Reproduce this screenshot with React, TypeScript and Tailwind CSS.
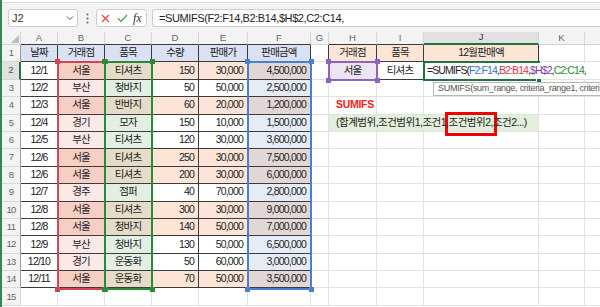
import React from "react";

const GRID = "border-[#e1e1e1]";
const DARK = "border-[#3c3c3c]";

const COLS: { k: string; w: string; label?: string }[] = [
  { k: "A", w: "w-[37px]" },
  { k: "B", w: "w-[47px]" },
  { k: "C", w: "w-[47px]" },
  { k: "D", w: "w-[47px]" },
  { k: "E", w: "w-[49px]" },
  { k: "F", w: "w-[63px]" },
  { k: "G", w: "w-[18px]" },
  { k: "H", w: "w-[48px]" },
  { k: "I", w: "w-[47px]" },
  { k: "J", w: "w-[115px]" },
  { k: "K", w: "w-[46px]" },
  { k: "L", w: "w-[40px]" },
];

const ALIGN = {
  l: "justify-start pl-[3px]",
  c: "justify-center",
  r: "justify-end pr-[4px]",
};

const DATA = [
  ["12/1", "서울", "티셔츠", "150", "30,000", "4,500,000"],
  ["12/2", "부산", "청바지", "50", "50,000", "2,500,000"],
  ["12/3", "서울", "반바지", "60", "20,000", "1,200,000"],
  ["12/4", "경기", "모자", "150", "10,000", "1,500,000"],
  ["12/5", "부산", "티셔츠", "120", "30,000", "3,600,000"],
  ["12/6", "서울", "티셔츠", "250", "30,000", "7,500,000"],
  ["12/6", "서울", "티셔츠", "200", "30,000", "6,000,000"],
  ["12/7", "경주", "점퍼", "40", "70,000", "2,800,000"],
  ["12/8", "서울", "티셔츠", "300", "30,000", "9,000,000"],
  ["12/8", "서울", "청바지", "140", "50,000", "7,000,000"],
  ["12/9", "부산", "청바지", "130", "50,000", "6,500,000"],
  ["12/10", "경기", "운동화", "50", "60,000", "3,000,000"],
  ["12/11", "서울", "운동화", "70", "50,000", "3,500,000"],
];

const HEAD = ["날짜", "거래점", "품목", "수량", "판매가", "판매금액"];

type Spec = { t?: React.ReactNode; al?: "l" | "c" | "r"; bg?: string; bd?: string; extra?: string };

function spec(n: number, k: string): Spec {
  const tableIdx = "ABCDEF".indexOf(k);
  if (n === 1) {
    if (tableIdx >= 0) return { t: HEAD[tableIdx], al: "c", bg: "bg-[#d9e1f2]", bd: DARK };
    if (k === "G") return { bd: "border-b-[#e1e1e1] border-r-[#3c3c3c]" };
    if (k === "H") return { t: "거래점", al: "c", bg: "bg-[#fce4d6]", bd: DARK };
    if (k === "I") return { t: "품목", al: "c", bg: "bg-[#fce4d6]", bd: DARK };
    if (k === "J") return { t: "12월판매액", al: "c", bg: "bg-[#fce4d6]", bd: DARK };
    return {};
  }
  if (n >= 2 && n <= 14 && tableIdx >= 0) {
    const r = DATA[n - 2];
    const seoul = r[1] === "서울";
    const t = r[tableIdx];
    if (k === "A") return { t, al: "c", bd: DARK };
    if (k === "B") return { t, al: "c", bd: DARK, bg: seoul ? "bg-[#f6cec4]" : "bg-[#fbe8e7]" };
    if (k === "C") return { t, al: "c", bd: DARK, bg: seoul ? "bg-[#e5dcc7]" : "bg-[#e3efe2]" };
    if (k === "D" || k === "E") return { t, al: "r", bd: DARK, bg: seoul ? "bg-[#fce4d6]" : "bg-white" };
    return { t, al: "r", bd: DARK, bg: seoul ? "bg-[#e3d7d5]" : "bg-[#e6ecf7]" };
  }
  if (n === 2) {
    if (k === "G") return { bd: "border-b-[#e1e1e1] border-r-[#3c3c3c]" };
    if (k === "H") return { t: "서울", al: "c", bg: "bg-[#ede5f3]", bd: DARK };
    if (k === "I") return { t: "티셔츠", al: "c", bd: DARK };
    if (k === "J") return { bd: DARK };
  }
  if (n === 4 && k === "H") {
    return {
      t: <span className="relative z-10 font-bold text-[#ff1a1a] tracking-[-0.3px]">SUMIFS</span>,
      al: "l",
      extra: "pl-[7px]",
    };
  }
  if (n === 5) {
    if (k === "H")
      return {
        t: <span className="relative z-10 tracking-[-0.5px]">(합계범위,조건범위1,조건1,조건범위2,조건2...)</span>,
        al: "l",
        bg: "bg-[#e2efda]",
        bd: "border-b-[#e1e1e1] border-r-[#e2efda]",
        extra: "pl-[7px]",
      };
    if (k === "I") return { bg: "bg-[#e2efda]", bd: "border-b-[#e1e1e1] border-r-[#e2efda]" };
    if (k === "J") return { bg: "bg-[#e2efda]" };
  }
  return {};
}

function SheetRow({ n }: { n: number }) {
  const sel = n === 2;
  return (
    <div className="flex h-[17.4px]">
      <div
        className={`w-[19px] shrink-0 h-full flex items-center justify-center border-b border-r text-[9.5px] ${
          sel
            ? "bg-[#e1e1e1] text-[#1e7145] border-b-[#d4d4d4] border-r-2 border-r-[#217346]"
            : n <= 14
            ? "bg-[#f3f3f3] text-[#666] border-b-[#d8d8d8] border-r-[#9a9a9a]"
            : "bg-[#f3f3f3] text-[#666] border-[#d8d8d8]"
        }`}
      >
        {n}
      </div>
      {COLS.map((c) => {
        const s = spec(n, c.k);
        return (
          <div
            key={c.k}
            className={`${c.w} shrink-0 h-full flex items-center border-r border-b whitespace-nowrap text-[#222] ${s.bd ?? GRID} ${
              s.bg ?? "bg-white"
            } ${ALIGN[s.al ?? "l"]} ${s.extra ?? ""}`}
          >
            {s.t}
          </div>
        );
      })}
    </div>
  );
}

function Handles({ color }: { color: string }) {
  return (
    <>
      <div className={`absolute -left-[4px] -top-[4px] w-[5px] h-[5px] ${color}`} />
      <div className={`absolute -right-[4px] -top-[4px] w-[5px] h-[5px] ${color}`} />
      <div className={`absolute -left-[4px] -bottom-[4px] w-[5px] h-[5px] ${color}`} />
      <div className={`absolute -right-[4px] -bottom-[4px] w-[5px] h-[5px] ${color}`} />
    </>
  );
}

export default function App() {
  const rows = Array.from({ length: 15 }, (_, i) => i + 1);
  return (
    <div className="relative w-[600px] h-[307px] overflow-hidden flex bg-white font-['Liberation_Sans','Noto_Sans_CJK_KR',sans-serif] text-[10.5px] tracking-[-0.8px]">
      <div className="w-[2px] shrink-0 bg-[#2f8a4e]" />
      <div className="flex-1 flex flex-col min-w-0">
        {/* formula bar */}
        <div className="h-[3px] bg-white border-b border-[#dedede]" />
        <div className="h-[29px] bg-[#f3f3f3] flex items-start pt-[6px] tracking-normal">
          <div className="ml-[6px] w-[70px] h-[18px] bg-white border border-[#cdcdcd] rounded-[3px] flex items-center justify-between pl-[3px] pr-[3px]">
            <span className="text-[11px] text-[#333]">J2</span>
            <svg width="8" height="6" viewBox="0 0 8 6">
              <path d="M1 1.5 L4 4.5 L7 1.5" fill="none" stroke="#555" strokeWidth="1" />
            </svg>
          </div>
          <div className="w-[18px] h-[18px] flex items-center justify-center">
            <svg width="3" height="11" viewBox="0 0 3 11">
              <circle cx="1.5" cy="1.5" r="1" fill="#666" />
              <circle cx="1.5" cy="5.5" r="1" fill="#666" />
              <circle cx="1.5" cy="9.5" r="1" fill="#666" />
            </svg>
          </div>
          <div className="w-[51px] h-[18px] bg-white border border-[#cdcdcd] rounded-[3px] flex items-center">
            <svg className="ml-[4px]" width="9" height="9" viewBox="0 0 9 9">
              <path d="M1 1 L8 8 M8 1 L1 8" stroke="#e04848" strokeWidth="1.2" />
            </svg>
            <svg className="ml-[7px]" width="11" height="9" viewBox="0 0 11 9">
              <path d="M1 4.5 L4 7.5 L10 1" fill="none" stroke="#3aa24c" strokeWidth="1.2" />
            </svg>
            <span className="ml-[5px] font-['Liberation_Serif',serif] italic text-[12px] text-[#333]">fx</span>
          </div>
          <div className="ml-[5px] flex-1 h-[18px] bg-white border border-r-0 border-[#cdcdcd] rounded-l-[3px] flex items-center pl-[6px]">
            <span className="text-[11px] tracking-[-0.4px] text-[#222] whitespace-nowrap">
              =SUMIFS(F2:F14,B2:B14,$H$2,C2:C14,
            </span>
          </div>
        </div>

        {/* column headers */}
        <div className="flex h-[13px] bg-[#f3f3f3] text-[9.5px] text-[#666] tracking-normal">
          <div className="w-[19px] shrink-0 h-full border-r border-b border-[#d4d4d4] flex items-end justify-end pr-[1px] pb-[1px]">
            <svg width="8" height="8" viewBox="0 0 8 8">
              <path d="M8 0 L8 8 L0 8 Z" fill="#bdbdbd" />
            </svg>
          </div>
          {COLS.map((c) => {
            const table = "ABCDEFHI".includes(c.k);
            const sel = c.k === "J";
            return (
              <div
                key={c.k}
                className={`${c.w} shrink-0 h-full flex items-center justify-center border-r border-b border-r-[#d4d4d4] ${
                  sel
                    ? "bg-[#e1e1e1] text-[#333] border-b-2 border-b-[#217346]"
                    : table
                    ? "border-b-[#3c3c3c]"
                    : "border-b-[#d4d4d4]"
                }`}
              >
                {c.k === "L" ? null : c.k}
              </div>
            );
          })}
        </div>

        {/* sheet rows */}
        <div className="flex flex-col">
          {rows.map((n) => (
            <SheetRow key={n} n={n} />
          ))}
        </div>
      </div>

      {/* reference range highlights */}
      <div className="absolute left-[57px] top-[61px] w-[49px] h-[229px] border-2 border-[#cf4655] pointer-events-none">
        <Handles color="bg-[#cf4655]" />
      </div>
      <div className="absolute left-[104px] top-[61px] w-[49px] h-[229px] border-2 border-[#2a8a3c] pointer-events-none">
        <Handles color="bg-[#2a8a3c]" />
      </div>
      <div className="absolute left-[247px] top-[61px] w-[65px] h-[229px] border-2 border-[#4a7fd4] pointer-events-none">
        <Handles color="bg-[#4a7fd4]" />
      </div>
      <div className="absolute left-[328px] top-[61px] w-[50px] h-[20px] border-2 border-[#8d63c0] pointer-events-none">
        <Handles color="bg-[#8d63c0]" />
      </div>

      {/* J2 selection + in-cell editor */}
      <div className="absolute left-[423px] top-[61px] w-[117px] h-[20px] border-2 border-[#217346]" />
      <div className="absolute left-[425px] top-[63px] w-[161px] h-[16px] bg-white flex items-center pl-[2px] text-[10.5px] tracking-[-0.9px] text-[#222] whitespace-nowrap">
        <span>=SUMIFS(</span>
        <span className="text-[#3b6fd0]">F2:F14</span>
        <span>,</span>
        <span className="text-[#d0394a]">B2:B14</span>
        <span>,</span>
        <span className="text-[#7d3fa8]">$H$2</span>
        <span>,</span>
        <span className="text-[#2a8a3c]">C2:C14</span>
        <span>,</span>
      </div>
      <div className="absolute left-[536px] top-[78px] w-[6px] h-[6px] bg-[#217346] border border-white" />

      {/* function tooltip */}
      <div className="absolute left-[433px] top-[82px] w-[167px] h-[14px] bg-white border border-r-0 border-[#b8b8b8] flex items-center pl-[4px] overflow-hidden text-[9px] tracking-[-0.3px] text-[#555] whitespace-nowrap">
        SUMIFS(sum_range, criteria_range1, criteri
      </div>

      {/* callout box */}
      <div className="absolute left-[445px] top-[112px] w-[52px] h-[24px] border-[3px] border-[#f00000]" />
    </div>
  );
}
